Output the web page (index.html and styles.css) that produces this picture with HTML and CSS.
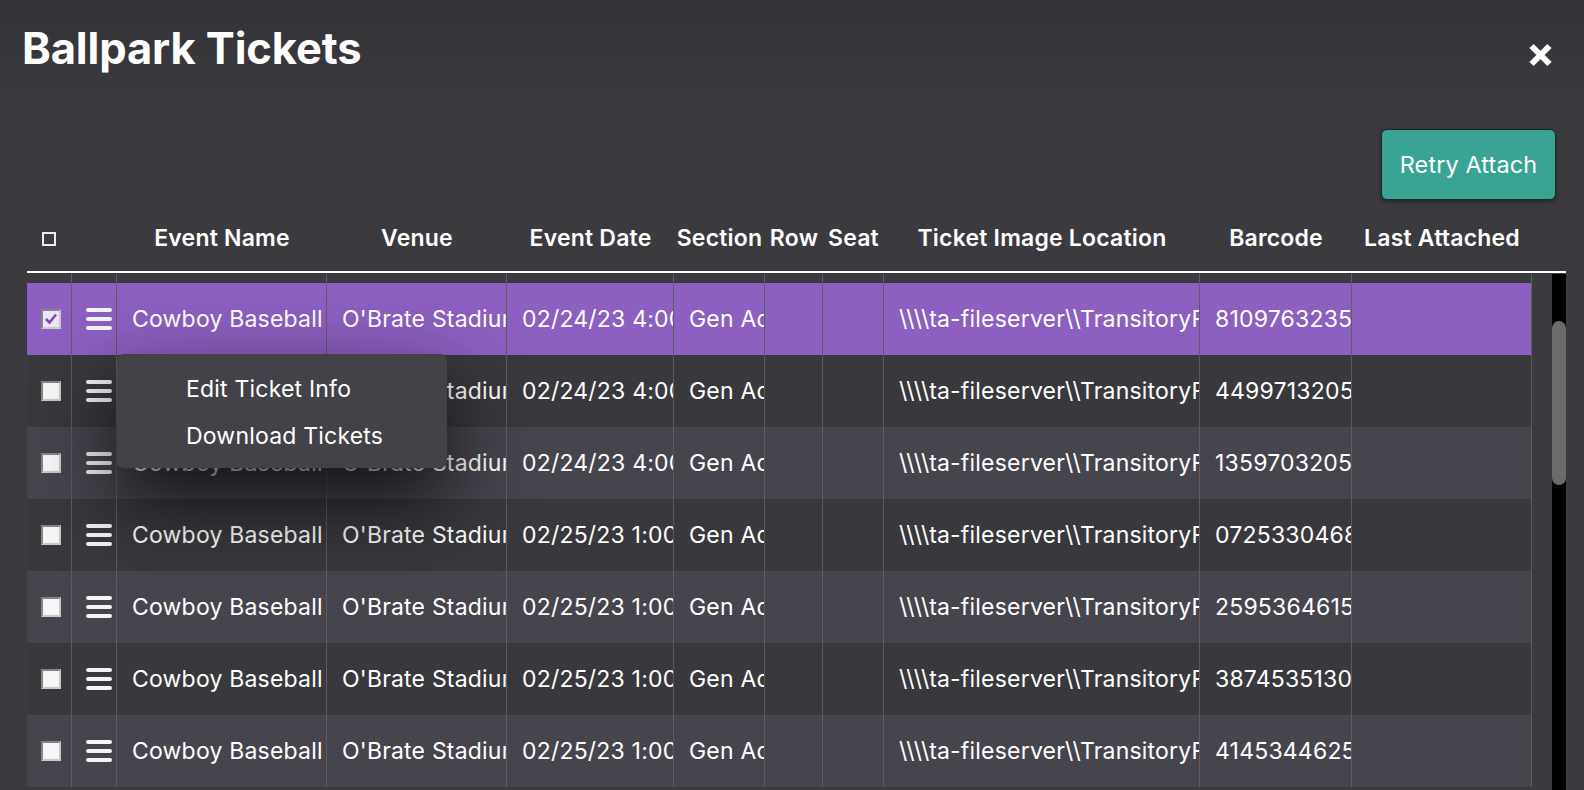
FILE: index.html
```html
<!DOCTYPE html>
<html>
<head>
  <title>Ballpark Tickets</title>
  <meta name="viewport" content="width=device-width, initial-scale=1.0">
  <link rel="stylesheet" href="styles.css">
</head>
<body>
  <div class="dialog">
    <div class="dialog-head">
      <h1>Ballpark Tickets</h1>
      <svg class="close" viewBox="0 0 25 24" width="25" height="24">
        <path d="M3.5 3 L21.5 21 M21.5 3 L3.5 21" stroke="#fff" stroke-width="6" fill="none"/>
      </svg>
    </div>

    <div class="toolbar">
      <button class="retry">Retry Attach</button>
    </div>

    <div class="grid">
      <div class="grid-head">
        <table class="cols">
          <colgroup>
            <col class="c-check"><col class="c-menu"><col class="c-event"><col class="c-venue"><col class="c-date">
            <col class="c-section"><col class="c-row"><col class="c-seat"><col class="c-loc"><col class="c-barcode">
            <col class="c-last"><col class="c-pad">
          </colgroup>
          <tr>
            <th><span class="head-box"></span></th>
            <th></th>
            <th>Event Name</th>
            <th>Venue</th>
            <th>Event Date</th>
            <th>Section</th>
            <th>Row</th>
            <th>Seat</th>
            <th>Ticket Image Location</th>
            <th>Barcode</th>
            <th>Last Attached</th>
            <th></th>
          </tr>
        </table>
      </div>

      <div class="grid-body">
        <table class="cols rows">
          <colgroup>
            <col class="c-check"><col class="c-menu"><col class="c-event"><col class="c-venue"><col class="c-date">
            <col class="c-section"><col class="c-row"><col class="c-seat"><col class="c-loc"><col class="c-barcode">
            <col class="c-last">
          </colgroup>
          <tr class="spacer"><td></td><td></td><td></td><td></td><td></td><td></td><td></td><td></td><td></td><td></td><td></td></tr>
          <tr class="selected">
            <td><span class="cb checked"><svg viewBox="0 0 16 16" width="16" height="16"><path d="M3 8 L6.5 11.5 L13 3.5" stroke="#7b4bb3" stroke-width="2.6" fill="none"/></svg></span></td>
            <td><span class="burger"><i></i><i></i><i></i></span></td>
            <td>Cowboy Baseball</td>
            <td>O'Brate Stadium</td>
            <td>02/24/23 4:00 PM</td>
            <td>Gen Admission</td>
            <td></td>
            <td></td>
            <td>\\\\ta-fileserver\\TransitoryFiles\\Tickets</td>
            <td>810976323512</td>
            <td></td>
          </tr>
          <tr>
            <td><span class="cb"></span></td>
            <td><span class="burger"><i></i><i></i><i></i></span></td>
            <td>Cowboy Baseball</td>
            <td>O'Brate Stadium</td>
            <td>02/24/23 4:00 PM</td>
            <td>Gen Admission</td>
            <td></td>
            <td></td>
            <td>\\\\ta-fileserver\\TransitoryFiles\\Tickets</td>
            <td>449971320544</td>
            <td></td>
          </tr>
          <tr>
            <td><span class="cb"></span></td>
            <td><span class="burger"><i></i><i></i><i></i></span></td>
            <td>Cowboy Baseball</td>
            <td>O'Brate Stadium</td>
            <td>02/24/23 4:00 PM</td>
            <td>Gen Admission</td>
            <td></td>
            <td></td>
            <td>\\\\ta-fileserver\\TransitoryFiles\\Tickets</td>
            <td>135970320517</td>
            <td></td>
          </tr>
          <tr>
            <td><span class="cb"></span></td>
            <td><span class="burger"><i></i><i></i><i></i></span></td>
            <td>Cowboy Baseball</td>
            <td>O'Brate Stadium</td>
            <td>02/25/23 1:00 PM</td>
            <td>Gen Admission</td>
            <td></td>
            <td></td>
            <td>\\\\ta-fileserver\\TransitoryFiles\\Tickets</td>
            <td>072533046821</td>
            <td></td>
          </tr>
          <tr>
            <td><span class="cb"></span></td>
            <td><span class="burger"><i></i><i></i><i></i></span></td>
            <td>Cowboy Baseball</td>
            <td>O'Brate Stadium</td>
            <td>02/25/23 1:00 PM</td>
            <td>Gen Admission</td>
            <td></td>
            <td></td>
            <td>\\\\ta-fileserver\\TransitoryFiles\\Tickets</td>
            <td>259536461590</td>
            <td></td>
          </tr>
          <tr>
            <td><span class="cb"></span></td>
            <td><span class="burger"><i></i><i></i><i></i></span></td>
            <td>Cowboy Baseball</td>
            <td>O'Brate Stadium</td>
            <td>02/25/23 1:00 PM</td>
            <td>Gen Admission</td>
            <td></td>
            <td></td>
            <td>\\\\ta-fileserver\\TransitoryFiles\\Tickets</td>
            <td>387453513006</td>
            <td></td>
          </tr>
          <tr>
            <td><span class="cb"></span></td>
            <td><span class="burger"><i></i><i></i><i></i></span></td>
            <td>Cowboy Baseball</td>
            <td>O'Brate Stadium</td>
            <td>02/25/23 1:00 PM</td>
            <td>Gen Admission</td>
            <td></td>
            <td></td>
            <td>\\\\ta-fileserver\\TransitoryFiles\\Tickets</td>
            <td>414534462573</td>
            <td></td>
          </tr>
        </table>

        <div class="scroll-track"><div class="scroll-thumb"></div></div>

        <div class="row-menu">
          <div class="row-menu-item">Edit Ticket Info</div>
          <div class="row-menu-item">Download Tickets</div>
        </div>
      </div>
    </div>
  </div>
</body>
</html>
```

FILE: styles.css
```css
body {
  margin: 0;
  font-family: 'Inter', 'Noto Sans', sans-serif;
  background: linear-gradient(#333237, #3b3a3f 110px);
  background-color: #3b3a3f;
  color: #fff;
  overflow: hidden;
}

.dialog {
  height: 790px;
}

.dialog-head {
  display: flex;
  justify-content: space-between;
  align-items: flex-start;
  padding: 26px 31px 0 22px;
}

.dialog-head h1 {
  margin: 0;
  font-size: 43.5px;
  line-height: 44px;
  font-weight: 700;
  letter-spacing: -0.1px;
}

.close {
  margin-top: 17px;
}

.toolbar {
  display: flex;
  justify-content: flex-end;
  padding: 59px 28px 0 0;
}

.retry {
  width: 175px;
  height: 71px;
  background-color: #3aa494;
  color: #fff;
  border: 1px solid #1c2624;
  border-radius: 6px;
  font-family: 'Inter', sans-serif;
  font-size: 23.5px;
  letter-spacing: 0.1px;
  box-shadow: 0 2px 5px rgba(0,0,0,0.35);
}

.grid {
  margin: 3px 0 0 27px;
  width: 1539px;
}

.cols {
  table-layout: fixed;
  border-collapse: separate;
  border-spacing: 0;
}

.c-check { width: 45px; }
.c-menu { width: 45px; }
.c-event { width: 210px; }
.c-venue { width: 180px; }
.c-date { width: 167px; }
.c-section { width: 91px; }
.c-row { width: 58px; }
.c-seat { width: 61px; }
.c-loc { width: 316px; }
.c-barcode { width: 152px; }
.c-last { width: 180px; }
.c-pad { width: 34px; }

.grid-head {
  border-bottom: 2px solid #fff;
}

.grid-head table {
  width: 1539px;
}

.grid-head th {
  height: 68px;
  padding: 2px 0 0;
  font-size: 23px;
  font-weight: 600;
  letter-spacing: 0.2px;
  text-align: center;
  white-space: nowrap;
  vertical-align: middle;
  box-sizing: border-box;
}

.head-box {
  display: inline-block;
  width: 10px;
  height: 10px;
  border: 2px solid #ececec;
  margin: 4px 0 0 -2px;
}

.grid-body {
  position: relative;
  display: flex;
  gap: 20px;
  align-items: flex-start;
}

.rows {
  width: 1505px;
}

.rows td {
  height: 72px;
  padding: 0 0 0 15px;
  border-right: 1px solid #5d5c62;
  font-size: 23px;
  letter-spacing: 0.2px;
  white-space: nowrap;
  overflow: hidden;
  vertical-align: middle;
  box-sizing: border-box;
}

.rows td:nth-child(1),
.rows td:nth-child(2) {
  padding-left: 14px;
}

.rows .spacer td {
  height: 10px;
}

.rows tr:nth-child(even) {
  background-color: #46454e;
}

.rows tr:nth-child(odd) {
  background-color: #39383d;
}

.rows tr.spacer {
  background-color: #3b3a3f;
}

.rows tr.selected {
  background-color: #8c5fc0;
}

.cb {
  display: block;
  width: 16px;
  height: 16px;
  background-color: #f6f6f6;
  border: 2px solid #c9c9c9;
  border-top-color: #858585;
  border-left-color: #858585;
}

.cb.checked {
  background-color: #ece6f3;
}

.cb svg {
  display: block;
}

.burger {
  display: flex;
  flex-direction: column;
  gap: 5px;
  width: 26px;
}

.burger i {
  display: block;
  height: 4px;
  border-radius: 2px;
  background-color: #f4f4f4;
}

.scroll-track {
  width: 14px;
  height: 520px;
  margin-top: 1px;
  background-color: #000;
}

.scroll-thumb {
  margin-top: 47px;
  height: 164px;
  border-radius: 7px;
  background-color: #6b6b6b;
}

.row-menu {
  position: absolute;
  left: 90px;
  top: 81px;
  width: 330px;
  height: 114px;
  box-sizing: border-box;
  padding-top: 12px;
  background-color: #434248;
  border-radius: 7px;
  box-shadow: 0 32px 80px rgba(0,0,0,0.75);
}

.row-menu-item {
  padding-left: 69px;
  font-size: 23px;
  letter-spacing: 0.2px;
  line-height: 47px;
  height: 47px;
}
```
